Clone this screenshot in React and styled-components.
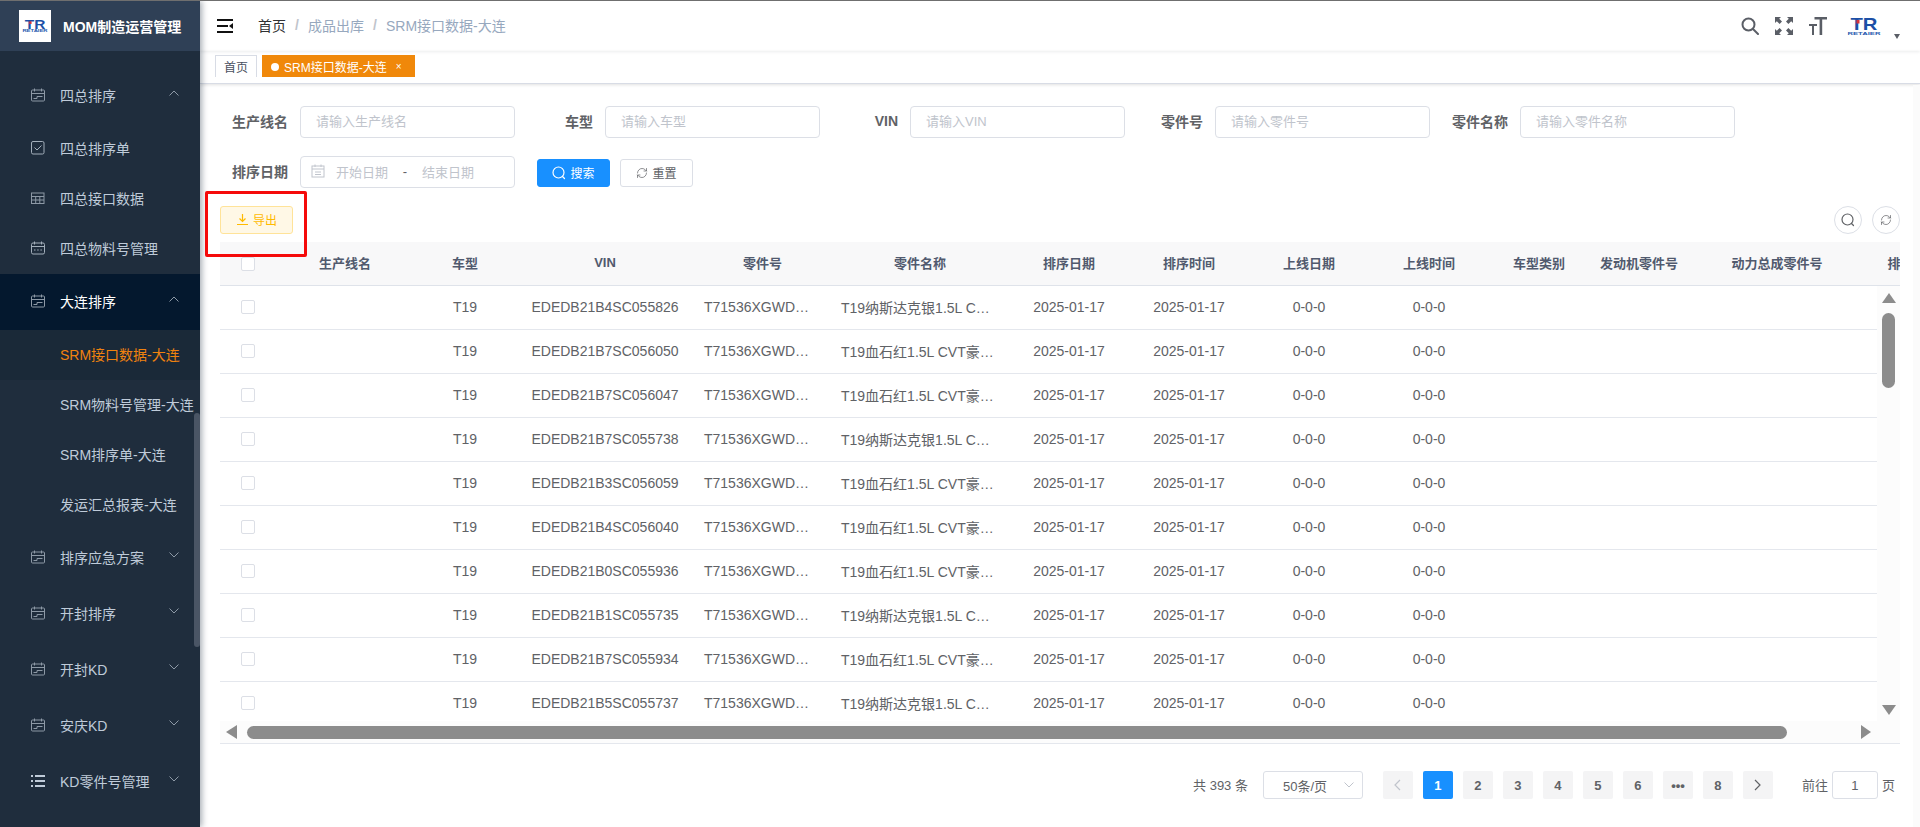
import { Fragment } from "react";
import styled, { createGlobalStyle, css } from "styled-components";
import { RefreshCw } from "lucide-react";

const GlobalStyle = createGlobalStyle`
  * {
    box-sizing: border-box;
  }
  html,
  body {
    margin: 0;
    height: 100%;
    overflow: hidden;
    background: #fff;
    font-family: "Liberation Sans", "Noto Sans CJK SC", sans-serif;
    font-size: 14px;
  }
`;

const vins = [
  ["EDEDB21B4SC055826", "纳斯达克银"],
  ["EDEDB21B7SC056050", "血石红"],
  ["EDEDB21B7SC056047", "血石红"],
  ["EDEDB21B7SC055738", "纳斯达克银"],
  ["EDEDB21B3SC056059", "血石红"],
  ["EDEDB21B4SC056040", "血石红"],
  ["EDEDB21B0SC055936", "血石红"],
  ["EDEDB21B1SC055735", "纳斯达克银"],
  ["EDEDB21B7SC055934", "血石红"],
  ["EDEDB21B5SC055737", "纳斯达克银"],
];

const headers = [
  "生产线名",
  "车型",
  "VIN",
  "零件号",
  "零件名称",
  "排序日期",
  "排序时间",
  "上线日期",
  "上线时间",
  "车型类别",
  "发动机零件号",
  "动力总成零件号",
  "排序顺序号",
];

const pages = ["1", "2", "3", "4", "5", "6", "•••", "8"];

const DateIcon = () => (
  <svg width="14" height="14" viewBox="0 0 14 14" fill="none" stroke="#8d99a6" strokeWidth="1">
    <rect x="0.5" y="2" width="13" height="11" rx="1" />
    <path d="M0.5 5.5h13M3.5 0.5v3M10.5 0.5v3M2.5 10.5h3.5M6 8.5h5.5M6 8.5v2" />
  </svg>
);

const CheckIcon = () => (
  <svg width="14" height="14" viewBox="0 0 14 14" fill="none" stroke="#a3afbb" strokeWidth="1">
    <rect x="0.5" y="0.5" width="12.5" height="12.5" rx="1.5" />
    <path d="M3.5 6.5l2.5 2.5 4.5-4.5" />
  </svg>
);

const TableIcon = () => (
  <svg width="14" height="14" viewBox="0 0 14 14" fill="none" stroke="#8d99a6" strokeWidth="1">
    <rect x="0.5" y="2" width="12.5" height="10.5" />
    <path d="M0.5 5.5h12.5M0.5 9h12.5M4.7 5.5v7M8.8 5.5v7" />
  </svg>
);

const PlanIcon = () => (
  <svg width="14" height="14" viewBox="0 0 14 14" fill="none" stroke="#a3afbb" strokeWidth="1">
    <rect x="0.5" y="2" width="13" height="11" rx="1.5" />
    <path d="M0.5 5.5h13M3.5 0.5v3M10.5 0.5v3M3 9h1.5M6.2 9h1.5M9.4 9h1.5" />
  </svg>
);

const ListIcon = () => (
  <svg width="14" height="14" viewBox="0 0 14 14" fill="#bfcbd9">
    <rect x="0" y="1" width="2" height="2" />
    <rect x="4" y="1" width="10" height="2" />
    <rect x="0" y="6" width="2" height="2" />
    <rect x="4" y="6" width="10" height="2" />
    <rect x="0" y="11" width="2" height="2" />
    <rect x="4" y="11" width="10" height="2" />
  </svg>
);

const Chevron = ({ up, color = "#8d99a6" }) => (
  <svg width="10" height="6" viewBox="0 0 10 6" fill="none" stroke={color} strokeWidth="1">
    <path d={up ? "M0.5 5.5L5 1l4.5 4.5" : "M0.5 0.5L5 5l4.5-4.5"} />
  </svg>
);

const PageArrow = ({ next, color }) => (
  <svg width="7" height="12" viewBox="0 0 7 12" fill="none" stroke={color} strokeWidth="1.2">
    <path d={next ? "M1 1l5 5-5 5" : "M6 1L1 6l5 5"} />
  </svg>
);

const TrLogo = ({ width }) => (
  <LogoSvg width={width} viewBox="0 0 34 18" height={(width * 18) / 34}>
    <text
      x="3.5"
      y="12.5"
      fontSize="17"
      fontWeight="700"
      fill="#1c4fa6"
      fontFamily="Liberation Sans"
      textLength="27"
      lengthAdjust="spacingAndGlyphs"
    >
      TR
    </text>
    <rect x="9.5" y="3" width="3" height="3.5" fill="#d8323a" />
    <text
      x="0.5"
      y="17.5"
      fontSize="4.4"
      fontWeight="700"
      fill="#2a5cb0"
      fontFamily="Liberation Sans"
      textLength="33"
      lengthAdjust="spacingAndGlyphs"
    >
      RETAIER
    </text>
  </LogoSvg>
);

const Hamburger = () => (
  <svg width="16" height="14" viewBox="0 0 16 14" fill="#111">
    <rect x="0" y="0" width="16" height="2" />
    <rect x="0" y="6" width="11" height="2" />
    <path d="M16 4v6l-4-3z" />
    <rect x="0" y="12" width="16" height="2" />
  </svg>
);

const SearchGlyph = () => (
  <svg width="18" height="18" viewBox="0 0 18 18" fill="none" stroke="#5a5e66" strokeWidth="2">
    <circle cx="7.5" cy="7.5" r="6" />
    <path d="M12 12l5 5" strokeLinecap="round" />
  </svg>
);

const FullscreenGlyph = () => (
  <svg width="18" height="18" viewBox="0 0 18 18" fill="#5a5e66">
    <path d="M0 0h6L4.2 1.8 7 4.6 4.6 7 1.8 4.2 0 6zM18 0v6l-1.8-1.8L13.4 7 11 4.6l2.8-2.8L12 0zM0 18v-6l1.8 1.8L4.6 11 7 13.4l-2.8 2.8L6 18zM18 18h-6l1.8-1.8L11 13.4l2.4-2.4 2.8 2.8L18 12z" />
  </svg>
);

const FontGlyph = () => (
  <svg width="18" height="18" viewBox="0 0 18 18" fill="#5a5e66">
    <path d="M5.5 0H18v2.4h-4.8V18h-2.6V2.4H5.5z" />
    <path d="M0 7h8v2H5v9H3V9H0z" />
  </svg>
);

const ThinSearch = ({ color }) => (
  <svg width="14" height="14" viewBox="0 0 14 14" fill="none" stroke={color} strokeWidth="1.2">
    <circle cx="6.5" cy="6.5" r="5.5" />
    <path d="M10.5 10.5l2 2" strokeLinecap="round" />
  </svg>
);

const DownloadGlyph = () => (
  <svg width="13" height="13" viewBox="0 0 13 13" fill="none" stroke="#ffba00" strokeWidth="1.2">
    <path d="M6.5 1v7M3.5 5.5l3 3 3-3M1 11.5h11" />
  </svg>
);

const DateGlyph = () => (
  <svg width="14" height="14" viewBox="0 0 14 14" fill="none" stroke="#c0c4cc" strokeWidth="1">
    <rect x="1" y="2" width="12" height="11" />
    <path d="M1 5h12M4 0.5v2.5M10 0.5v2.5M4 8h6M4 10.5h6" />
  </svg>
);

const SideSection = ({ icon, label, open, active }) => (
  <MenuTitle $active={active}>
    <IconSlot>{icon}</IconSlot>
    <span>{label}</span>
    <ChevronSlot>
      <Chevron up={open} />
    </ChevronSlot>
  </MenuTitle>
);

const SubItem = ({ icon, label, active }) => (
  <MenuItem $active={active} $indent={!icon}>
    {icon && <IconSlot>{icon}</IconSlot>}
    <span>{label}</span>
  </MenuItem>
);

const Field = ({ label, placeholder }) => (
  <FormItem>
    <Label>{label}</Label>
    <TextInput placeholder={placeholder} readOnly />
  </FormItem>
);

const App = () => (
  <Fragment>
    <GlobalStyle />
    <Frame>
      <Sidebar>
        <Brand>
          <BrandMark>
            <TrLogo width={26} />
          </BrandMark>
          <BrandName>MOM制造运营管理</BrandName>
        </Brand>
        <Menu>
          <SideSection icon={<DateIcon />} label="四总排序" open />
          <SubItem icon={<CheckIcon />} label="四总排序单" />
          <SubItem icon={<TableIcon />} label="四总接口数据" />
          <SubItem icon={<PlanIcon />} label="四总物料号管理" />
          <SideSection icon={<DateIcon />} label="大连排序" open active />
          <SubItem label="SRM接口数据-大连" active />
          <SubItem label="SRM物料号管理-大连" />
          <SubItem label="SRM排序单-大连" />
          <SubItem label="发运汇总报表-大连" />
          <SideSection icon={<DateIcon />} label="排序应急方案" />
          <SideSection icon={<DateIcon />} label="开封排序" />
          <SideSection icon={<DateIcon />} label="开封KD" />
          <SideSection icon={<DateIcon />} label="安庆KD" />
          <SideSection icon={<ListIcon />} label="KD零件号管理" />
        </Menu>
        <SideScroll />
      </Sidebar>

      <Main>
        <TopBar>
          <Hamburger />
          <Crumbs>
            <CrumbHome>首页</CrumbHome>
            <CrumbSep>/</CrumbSep>
            <span>成品出库</span>
            <CrumbSep>/</CrumbSep>
            <span>SRM接口数据-大连</span>
          </Crumbs>
          <TopIcons>
            <SearchGlyph />
            <FullscreenGlyph />
            <FontGlyph />
            <AvatarSlot>
              <TrLogo width={34} />
            </AvatarSlot>
            <Caret />
          </TopIcons>
        </TopBar>

        <TagsBar>
          <Tag>首页</Tag>
          <Tag $active>
            <TagDot />
            SRM接口数据-大连
            <TagClose>×</TagClose>
          </Tag>
        </TagsBar>

        <Content>
          <FormRow>
            <Field label="生产线名" placeholder="请输入生产线名" />
            <Field label="车型" placeholder="请输入车型" />
            <Field label="VIN" placeholder="请输入VIN" />
            <Field label="零件号" placeholder="请输入零件号" />
            <Field label="零件名称" placeholder="请输入零件名称" />
          </FormRow>
          <FormRow>
            <FormItem>
              <Label>排序日期</Label>
              <DateRange>
                <DateGlyph />
                <DateHint>开始日期</DateHint>
                <DateDash>-</DateDash>
                <DateHint>结束日期</DateHint>
              </DateRange>
            </FormItem>
            <FormActions>
              <Button $variant="primary">
                <ThinSearch color="#fff" />
                搜索
              </Button>
              <Button>
                <RefreshCw size={12} strokeWidth={1.4} color="#606266" />
                重置
              </Button>
            </FormActions>
          </FormRow>

          <Toolbar>
            <Button $variant="warning">
              <DownloadGlyph />
              导出
            </Button>
            <ToolbarRight>
              <CircleButton>
                <ThinSearch color="#606266" />
              </CircleButton>
              <CircleButton>
                <RefreshCw size={12} strokeWidth={1.4} color="#606266" />
              </CircleButton>
            </ToolbarRight>
            <Callout />
          </Toolbar>

          <TableHead>
            <HeadRow>
              <CheckCell>
                <Checkbox />
              </CheckCell>
              {headers.map((title) => (
                <HeadCell key={title}>{title}</HeadCell>
              ))}
            </HeadRow>
          </TableHead>

          <TableBody>
            <Rows>
              {vins.map(([vin, color]) => (
                <Row key={vin}>
                  <CheckCell>
                    <Checkbox />
                  </CheckCell>
                  <Cell />
                  <Cell>T19</Cell>
                  <Cell>{vin}</Cell>
                  <Cell>T71536XGWDW001</Cell>
                  <Cell>{`T19${color}1.5L CVT豪华版`}</Cell>
                  <Cell>2025-01-17</Cell>
                  <Cell>2025-01-17</Cell>
                  <Cell>0-0-0</Cell>
                  <Cell>0-0-0</Cell>
                </Row>
              ))}
            </Rows>
            <VTrack>
              <Arrow $dir="up" />
              <VThumb />
              <Arrow $dir="down" />
            </VTrack>
          </TableBody>
          <HTrack>
            <Arrow $dir="left" />
            <HThumb />
            <Arrow $dir="right" />
          </HTrack>

          <Pager>
            <PagerText>共 393 条</PagerText>
            <PageSize>
              <span>50条/页</span>
              <Chevron color="#c0c4cc" />
            </PageSize>
            <PageButtons>
              <PageButton $disabled>
                <PageArrow color="#c0c4cc" />
              </PageButton>
              {pages.map((page) => (
                <PageButton key={page} $active={page === "1"}>
                  {page}
                </PageButton>
              ))}
              <PageButton>
                <PageArrow next color="#606266" />
              </PageButton>
            </PageButtons>
            <PagerText>前往</PagerText>
            <PageInput>1</PageInput>
            <PagerText>页</PagerText>
          </Pager>
        </Content>
        <PageTrack />
      </Main>
    </Frame>
  </Fragment>
);

const LogoSvg = styled.svg`
  overflow: visible;
`;

const Frame = styled.div`
  display: flex;
  height: 100vh;
  overflow: hidden;
  border-top: 1px solid #6f6f6f;
`;

const Sidebar = styled.aside`
  position: relative;
  z-index: 2;
  display: flex;
  flex: none;
  flex-direction: column;
  width: 200px;
  overflow: hidden;
  background: #1f2d3d;
  box-shadow: 2px 0 6px rgba(0, 21, 41, 0.35);
`;

const Brand = styled.div`
  display: flex;
  flex: none;
  align-items: center;
  height: 50px;
  padding-left: 19px;
  background: #2f4056;
`;

const BrandMark = styled.div`
  display: flex;
  align-items: center;
  justify-content: center;
  width: 32px;
  height: 32px;
  background: #fff;
`;

const BrandName = styled.h1`
  margin: 0 0 0 12px;
  color: #fff;
  font-size: 14px;
  font-weight: 700;
  white-space: nowrap;
`;

const Menu = styled.nav`
  flex: 1;
  padding-top: 17px;
`;

const IconSlot = styled.span`
  display: flex;
  flex: none;
  width: 29px;
`;

const ChevronSlot = styled.span`
  display: flex;
  margin-left: auto;
  margin-bottom: 4px;
`;

const MenuTitle = styled.div`
  display: flex;
  align-items: center;
  height: 56px;
  padding: 0 21px 2px 31px;
  color: ${(props) => (props.$active ? "#fff" : "#bfcbd9")};
  background: ${(props) => (props.$active ? "#04182e" : "transparent")};
`;

const MenuItem = styled.div`
  display: flex;
  align-items: center;
  height: 50px;
  padding: 0 0 2px ${(props) => (props.$indent ? "60px" : "31px")};
  color: ${(props) => (props.$active ? "#f0820f" : "#bfcbd9")};
  background: ${(props) => (props.$active ? "#1a2938" : "transparent")};
  white-space: nowrap;
`;

const SideScroll = styled.div`
  position: absolute;
  top: 412px;
  right: 0;
  width: 6px;
  height: 234px;
  border-radius: 3px;
  background: #4a5565;
`;

const Main = styled.main`
  position: relative;
  display: flex;
  flex: 1;
  flex-direction: column;
  min-width: 0;
`;

const PageTrack = styled.div`
  position: absolute;
  top: 84px;
  right: 0;
  bottom: 0;
  width: 7px;
  background: #fbfbfb;
`;

const TopBar = styled.header`
  display: flex;
  flex: none;
  align-items: center;
  height: 50px;
  padding: 0 20px 0 17px;
  box-shadow: 0 1px 3px rgba(0, 21, 41, 0.08);
`;

const Crumbs = styled.div`
  display: flex;
  align-items: center;
  margin-left: 25px;
  padding-bottom: 2px;
  color: #97a8be;
`;

const CrumbHome = styled.span`
  color: #303133;
`;

const CrumbSep = styled.span`
  width: 22px;
  color: #c0c4cc;
  font-weight: 700;
  text-align: center;
`;

const TopIcons = styled.div`
  display: flex;
  align-items: center;
  gap: 16px;
  margin-left: auto;
`;

const AvatarSlot = styled.div`
  display: flex;
  margin-left: 4px;
`;

const Caret = styled.span`
  width: 0;
  height: 0;
  margin: 21px 0 0 -3px;
  border-top: 5px solid #5a5e66;
  border-right: 3.5px solid transparent;
  border-left: 3.5px solid transparent;
`;

const TagsBar = styled.div`
  display: flex;
  flex: none;
  gap: 5px;
  height: 33px;
  padding: 4px 0 0 15px;
  border-bottom: 1px solid #d8dce5;
  box-shadow: 0 1px 3px rgba(0, 0, 0, 0.12);
`;

const Tag = styled.div`
  display: flex;
  align-items: center;
  height: 22px;
  padding: 0 ${(props) => (props.$active ? "12px" : "8px")} 0 8px;
  border: 1px solid ${(props) => (props.$active ? "#f0880a" : "#d8dce5")};
  border-bottom: none;
  background: ${(props) => (props.$active ? "#f0880a" : "#fff")};
  color: ${(props) => (props.$active ? "#fff" : "#495060")};
  font-size: 12px;
`;

const TagDot = styled.i`
  width: 8px;
  height: 8px;
  margin-right: 5px;
  border-radius: 50%;
  background: #fff;
`;

const TagClose = styled.span`
  margin-left: 9px;
  font-size: 10px;
`;

const Content = styled.section`
  flex: 1;
  min-width: 0;
  padding: 22px 20px 0;
`;

const FormRow = styled.div`
  display: flex;
  gap: 10px;
  margin-bottom: 18px;
`;

const FormItem = styled.div`
  display: flex;
  align-items: center;
`;

const Label = styled.label`
  width: 80px;
  padding: 0 12px 2px 0;
  color: #606266;
  font-weight: 700;
  text-align: right;
`;

const fieldBox = css`
  width: 215px;
  height: 32px;
  border: 1px solid #dcdfe6;
  border-radius: 4px;
  background: #fff;
`;

const TextInput = styled.input`
  ${fieldBox}
  padding: 0 15px 2px;
  outline: none;
  font: inherit;
  font-size: 13px;

  &::placeholder {
    color: #c0c4cc;
    opacity: 1;
  }
`;

const DateRange = styled.div`
  ${fieldBox}
  display: flex;
  align-items: center;
  padding: 0 0 2px 10px;
  color: #c0c4cc;
  font-size: 13px;
`;

const DateHint = styled.span`
  margin-left: 11px;
`;

const DateDash = styled.span`
  width: 34px;
  margin-right: -11px;
  color: #606266;
  text-align: center;
`;

const FormActions = styled.div`
  display: flex;
  gap: 10px;
  margin: 3px 0 0 12px;
`;

const buttonVariants = {
  primary: css`
    border-color: #1890ff;
    background: #1890ff;
    color: #fff;
  `,
  warning: css`
    border-color: #ffe399;
    background: #fff8e6;
    color: #ffba00;
  `,
};

const Button = styled.button`
  display: flex;
  align-items: center;
  justify-content: center;
  gap: 4px;
  width: 73px;
  height: 28px;
  padding: 0 0 1px;
  border: 1px solid #dcdfe6;
  border-radius: 3px;
  background: #fff;
  color: #606266;
  font: inherit;
  font-size: 12px;
  ${(props) => buttonVariants[props.$variant]}
`;

const Toolbar = styled.div`
  position: relative;
  display: flex;
  justify-content: space-between;
  margin-bottom: 8px;
`;

const ToolbarRight = styled.div`
  display: flex;
  gap: 10px;
`;

const CircleButton = styled.button`
  display: flex;
  align-items: center;
  justify-content: center;
  width: 28px;
  height: 28px;
  padding: 0;
  border: 1px solid #dcdfe6;
  border-radius: 50%;
  background: #fff;
`;

const Callout = styled.div`
  position: absolute;
  z-index: 3;
  top: -15px;
  left: -15px;
  width: 102px;
  height: 66px;
  border: 3px solid #f50a0a;
  border-radius: 2px;
  pointer-events: none;
`;

const columnTemplate = css`
  display: grid;
  grid-template-columns: 56px 138px 102px 178px 137px 178px 120px 120px 120px 120px 100px 100px 176px 110px;
`;

const TableHead = styled.div`
  height: 44px;
  overflow: hidden;
  border-bottom: 1px solid #dfe3ea;
  background: #f8f8f9;
`;

const HeadRow = styled.div`
  ${columnTemplate}
  height: 43px;
  align-items: center;
`;

const cellText = css`
  overflow: hidden;
  padding: 0 10px;
  text-align: center;
  text-overflow: ellipsis;
  white-space: nowrap;
`;

const HeadCell = styled.div`
  ${cellText}
  padding-bottom: 2px;
  color: #515a6e;
  font-size: 13px;
  font-weight: 700;
`;

const TableBody = styled.div`
  display: flex;
  height: 435px;
  overflow: hidden;
`;

const Rows = styled.div`
  flex: 1;
  min-width: 0;
  overflow: hidden;
`;

const Row = styled.div`
  ${columnTemplate}
  flex: none;
  height: 44px;
  padding-bottom: 1px;
  align-items: center;
  border-bottom: 1px solid #e4e7ed;
`;

const Cell = styled.div`
  ${cellText}
  padding-bottom: 1px;
  color: #606266;
`;

const CheckCell = styled.div`
  display: flex;
  justify-content: center;
`;

const Checkbox = styled.span`
  width: 14px;
  height: 14px;
  border: 1px solid #dcdfe6;
  border-radius: 2px;
  background: #fff;
`;

const VTrack = styled.div`
  display: flex;
  flex: none;
  flex-direction: column;
  align-items: center;
  width: 23px;
  padding: 7px 0 6px;
  background: #fcfcfc;
`;

const VThumb = styled.div`
  width: 13px;
  height: 75px;
  margin: 10px 0 auto;
  border-radius: 7px;
  background: #8c8c8c;
`;

const arrowShapes = {
  up: css`
    border-right: 7px solid transparent;
    border-bottom: 10px solid #8c8c8c;
    border-left: 7px solid transparent;
  `,
  down: css`
    border-top: 10px solid #8c8c8c;
    border-right: 7px solid transparent;
    border-left: 7px solid transparent;
  `,
  left: css`
    border-top: 7px solid transparent;
    border-right: 11px solid #8c8c8c;
    border-bottom: 7px solid transparent;
  `,
  right: css`
    border-top: 7px solid transparent;
    border-bottom: 7px solid transparent;
    border-left: 10px solid #8c8c8c;
  `,
};

const Arrow = styled.span`
  flex: none;
  width: 0;
  height: 0;
  ${(props) => arrowShapes[props.$dir]}
`;

const HTrack = styled.div`
  display: flex;
  align-items: center;
  height: 23px;
  padding-left: 6px;
  border-bottom: 1px solid #e4e7ed;
  background: #fcfcfc;
`;

const HThumb = styled.div`
  width: 1540px;
  height: 13px;
  margin: 0 74px 0 10px;
  border-radius: 7px;
  background: #8c8c8c;
`;

const Pager = styled.footer`
  display: flex;
  align-items: center;
  justify-content: flex-end;
  height: 28px;
  margin-top: 27px;
  padding-right: 5px;
`;

const PagerText = styled.span`
  padding-bottom: 2px;
  color: #606266;
  font-size: 13px;
  white-space: nowrap;
`;

const PageSize = styled.div`
  display: flex;
  align-items: center;
  justify-content: space-between;
  width: 100px;
  height: 28px;
  margin: 0 20px 0 15px;
  padding: 0 8px 0 19px;
  border: 1px solid #dcdfe6;
  border-radius: 3px;
  color: #606266;
  font-size: 13px;
`;

const PageButtons = styled.div`
  display: flex;
  gap: 10px;
  margin-right: 29px;
`;

const PageButton = styled.button`
  display: flex;
  align-items: center;
  justify-content: center;
  width: 30px;
  height: 28px;
  padding: 0;
  border: none;
  border-radius: 2px;
  background: ${(props) => (props.$active ? "#1890ff" : "#f4f4f5")};
  color: ${(props) => (props.$active ? "#fff" : "#606266")};
  font: inherit;
  font-size: 13px;
  font-weight: 700;
`;

const PageInput = styled.div`
  display: flex;
  align-items: center;
  justify-content: center;
  width: 46px;
  height: 28px;
  margin: 0 4px;
  border: 1px solid #dcdfe6;
  border-radius: 3px;
  color: #606266;
  font-size: 13px;
`;

export default App;
